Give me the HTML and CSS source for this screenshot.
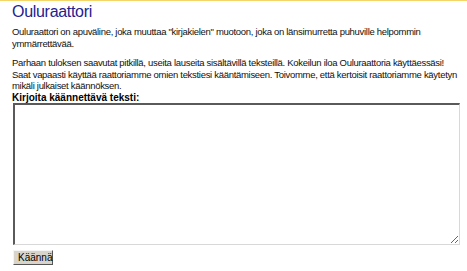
FILE: index.html
```html
<!DOCTYPE html>
<html lang="fi">
<head>
<meta charset="utf-8">
<title>Ouluraattori</title>
<link rel="stylesheet" href="styles.css">
</head>
<body>
<div class="topline"></div>
<div class="content">
  <h1 class="title">Ouluraattori</h1>
  <p class="para first">Ouluraattori on apuväline, joka muuttaa "kirjakielen" muotoon, joka on länsimurretta puhuville helpommin ymmärrettävää.</p>
  <p class="para">Parhaan tuloksen saavutat pitkillä, useita lauseita sisältävillä teksteillä. Kokeilun iloa Ouluraattoria käyttäessäsi! Saat vapaasti käyttää raattoriamme omien tekstiesi kääntämiseen. Toivomme, että kertoisit raattoriamme käytetyn mikäli julkaiset käännöksen.</p>
  <form class="form">
    <label class="label" for="src">Kirjoita käännettävä teksti:</label>
    <textarea id="src" class="input"></textarea>
    <button type="button" class="btn">Käännä</button>
  </form>
</div>
</body>
</html>
```
FILE: styles.css
```css
html, body {
  margin: 0;
  padding: 0;
  background: #ffffff;
}
body {
  font-family: "Liberation Sans", Arial, sans-serif;
  font-size: 10px;
  color: #111111;
}
.topline {
  height: 1px;
  background: #f3d56a;
}
.content {
  padding: 0 0 0 12px;
}
.title {
  margin: 2px 0 0 0;
  font-size: 16px;
  font-weight: normal;
  color: #22228f;
  line-height: 18px;
  letter-spacing: -0.3px;
}
.para {
  margin: 8px 0 0 0;
  width: 450px;
  line-height: 11.5px;
  font-size: 9.5px;
  letter-spacing: -0.3px;
}
.para.first {
  margin-top: 5px;
}
.form {
  display: flex;
  flex-direction: column;
  align-items: flex-start;
}
.label {
  font-weight: bold;
  line-height: 11.5px;
  color: #000;
}
.input {
  box-sizing: border-box;
  width: 447px;
  height: 142px;
  margin: 0 0 0 1px;
  border-style: solid;
  border-width: 2px 1px 1px 2px;
  border-color: #5a5a5a #d8d8d8 #d8d8d8 #5a5a5a;
  resize: both;
  background: #fff;
}
.btn {
  box-sizing: border-box;
  margin: 5px 0 0 1px;
  font-family: "Liberation Sans", Arial, sans-serif;
  font-size: 10px;
  padding: 0 4px;
  width: 40px;
  height: 15px;
  line-height: 12px;
  background: #d8d4cc;
  border: 1px solid;
  border-color: #f4f4f4 #555 #555 #f4f4f4;
  color: #000;
}
```
